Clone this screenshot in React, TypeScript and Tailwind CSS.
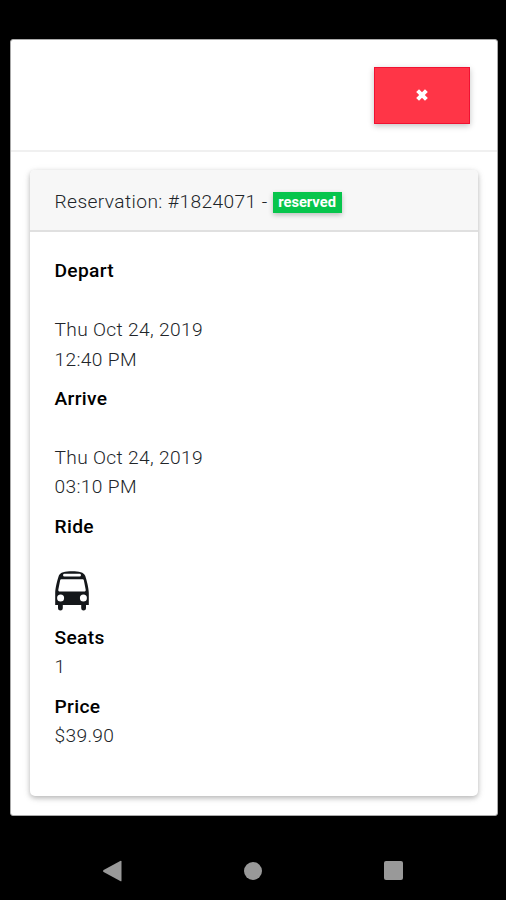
import type { ReactNode } from "react";

function CloseIcon() {
  return (
    <svg width="12" height="12" viewBox="0 0 12 12" fill="none" stroke="#fff" strokeWidth="4">
      <path d="M1.6 1.6 10.4 10.4M10.4 1.6 1.6 10.4" />
    </svg>
  );
}

function BusIcon() {
  return (
    <svg width="34" height="40" viewBox="0 0 34 40" fill="#14171a">
      <path
        fillRule="evenodd"
        d="M17 .3C24 .3 29 1.4 30.3 4.9 31.4 7.9 33.8 17 33.8 22V34H31V37.2A2.3 2.3 0 0 1 26.2 37.2V34H7.8V37.2A2.3 2.3 0 0 1 3 37.2V34H.2V22C.2 17 2.6 7.9 3.7 4.9 5 1.4 10 .3 17 .3ZM9.4 2.8A1.3 1.3 0 0 0 9.4 5.5H24.6A1.3 1.3 0 0 0 24.6 2.8ZM6.6 8.2C5.7 8.2 5.3 8.6 5.1 9.4L3.3 18.7C3.1 19.9 3.7 20.5 4.8 20.5H29.2C30.3 20.5 30.9 19.9 30.7 18.7L28.9 9.4C28.7 8.6 28.3 8.2 27.4 8.2ZM5.6 23.6A3.5 3.5 0 1 0 5.6 30.6A3.5 3.5 0 1 0 5.6 23.6ZM28.4 23.6A3.5 3.5 0 1 0 28.4 30.6A3.5 3.5 0 1 0 28.4 23.6Z"
      />
    </svg>
  );
}

function Field({ label, spaced, children }: { label: string; spaced?: boolean; children: ReactNode }) {
  return (
    <div className="mb-[9.8px]">
      <dt className={spaced ? "mb-[29.5px] font-medium text-black" : "font-medium text-black"}>{label}</dt>
      <dd>{children}</dd>
    </div>
  );
}

export default function App() {
  return (
    <div className="flex h-[900px] w-[506px] flex-col overflow-hidden bg-black pt-[39px] font-['Roboto',sans-serif] text-[19.2px] leading-[29.5px] font-light tracking-[0.33px] text-[#212529]">
      <main className="mr-[8.5px] ml-[10px] flex h-[776.5px] shrink-0 flex-col rounded-[3px] border border-[#aaa] bg-white">
        <header className="flex h-[112px] shrink-0 items-start justify-end border-b-2 border-[#f0f0f0] pt-[27px] pr-[26.5px]">
          <button
            aria-label="Close"
            className="flex h-[57px] w-[96px] items-center justify-center border border-[#f01232] bg-[#ff3547] pb-[2px] shadow-[0_2px_6px_rgba(0,0,0,0.24)]"
          >
            <CloseIcon />
          </button>
        </header>
        <section className="mx-[18.5px] mt-[18px] h-[626px] overflow-hidden rounded-[5px] bg-white shadow-[0_2px_5px_rgba(0,0,0,0.24),0_2px_10px_rgba(0,0,0,0.08)]">
          <div className="flex h-[62px] items-center border-b-2 border-[#e0e0e0] bg-[#f7f7f7] px-[25px]">
            <span className="mt-[3px] tracking-[0.39px]">Reservation: #1824071 -</span>
            <span className="mt-[4px] ml-[5px] flex h-[21px] w-[69px] items-center justify-center bg-[#07c54c] text-[14.7px] leading-none font-bold tracking-normal text-white shadow-[0_2px_5px_rgba(0,0,0,0.24)]">
              reserved
            </span>
          </div>
          <dl className="px-[25px] pt-[24.2px]">
            <Field label="Depart" spaced>
              Thu Oct 24, 2019
              <br />
              12:40 PM
            </Field>
            <Field label="Arrive" spaced>
              Thu Oct 24, 2019
              <br />
              03:10 PM
            </Field>
            <div className="mb-[12px]">
              <dt className="mb-[29.5px] font-medium text-black">Ride</dt>
              <dd>
                <BusIcon />
              </dd>
            </div>
            <Field label="Seats">1</Field>
            <Field label="Price">$39.90</Field>
          </dl>
        </section>
      </main>
      <nav className="flex flex-1 items-center justify-between pt-[26px] pr-[103px] pl-[102px]">
        <svg width="20" height="22" viewBox="0 0 20 22" fill="#999">
          <path d="M1.6 10 18.2.9Q19.5.3 19.5 1.6V20.4Q19.5 21.7 18.2 21L1.6 12Q.2 11 1.6 10Z" />
        </svg>
        <span className="size-[18px] rounded-full bg-[#999]" />
        <span className="size-[19px] rounded-[2px] bg-[#999]" />
      </nav>
    </div>
  );
}
